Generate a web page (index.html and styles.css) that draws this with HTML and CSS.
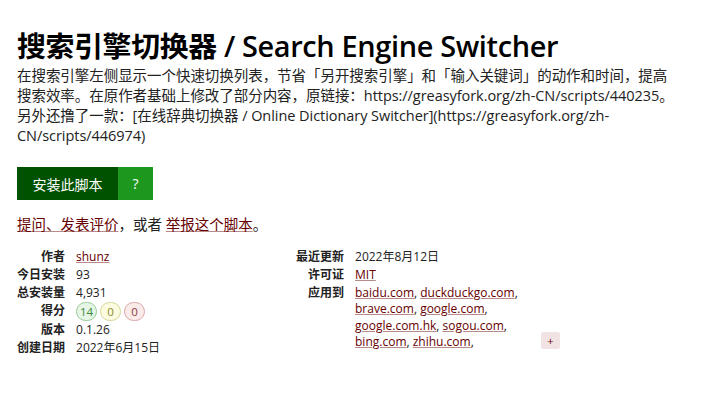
FILE: index.html
```html
<!DOCTYPE html>
<html lang="zh-CN">
<head>
<meta charset="utf-8">
<title>搜索引擎切换器 / Search Engine Switcher</title>
<link rel="stylesheet" href="styles.css">
</head>
<body>
<main class="page">
  <h2 class="title">搜索引擎切换器 / Search Engine Switcher</h2>
  <p class="desc">在搜索引擎左侧显示一个快速切换列表，节省「另开搜索引擎」和「输入关键词」的动作和时间，提高搜索效率。在原作者基础上修改了部分内容，原链接：https://greasyfork.org/zh-CN/scripts/440235。另外还撸了一款：[在线辞典切换器 / Online Dictionary Switcher](https://greasyfork.org/zh-CN/scripts/446974)</p>
  <div class="install">
    <a class="install-link" href="#">安装此脚本</a><a class="install-help" href="#">?</a>
  </div>
  <p class="feedback"><a href="#">提问、发表评价</a>，或者 <a href="#">举报这个脚本</a>。</p>
  <div class="meta">
    <dl class="meta-col">
      <dt>作者</dt><dd><a href="#">shunz</a></dd>
      <dt>今日安装</dt><dd>93</dd>
      <dt>总安装量</dt><dd>4,931</dd>
      <dt>得分</dt><dd class="scores"><span class="score good">14</span><span class="score ok">0</span><span class="score bad">0</span></dd>
      <dt>版本</dt><dd>0.1.26</dd>
      <dt>创建日期</dt><dd>2022年6月15日</dd>
    </dl>
    <dl class="meta-col">
      <dt>最近更新</dt><dd>2022年8月12日</dd>
      <dt>许可证</dt><dd><a href="#">MIT</a></dd>
      <dt>应用到</dt>
      <dd class="applies">
        <span class="sites"><a href="#">baidu.com</a>, <a href="#">duckduckgo.com</a>, <a href="#">brave.com</a>, <a href="#">google.com</a>, <a href="#">google.com.hk</a>, <a href="#">sogou.com</a>, <a href="#">bing.com</a>, <a href="#">zhihu.com</a>,</span>
        <button class="more">+</button>
      </dd>
    </dl>
  </div>
</main>
</body>
</html>
```

FILE: styles.css
```css
html, body {
  margin: 0;
  padding: 0;
  background: #fff;
}
body {
  font-family: "Open Sans", "Noto Sans CJK SC", sans-serif;
  color: #222;
}
.page {
  padding: 26px 14px 0 17px;
}
a {
  color: #670000;
  text-decoration: underline;
  text-decoration-color: #b88a8a;
}
.title {
  margin: 0;
  font-size: 28.9px;
  line-height: 40px;
  font-weight: 600;
  color: #000;
  letter-spacing: -0.35px;
}
.desc {
  margin: 0;
  font-size: 14.5px;
  line-height: 20px;
  color: #222;
  letter-spacing: -0.05px;
  max-width: 661px;
}
.install {
  display: flex;
  margin-top: 21px;
  height: 33px;
}
.install-link, .install-help {
  display: flex;
  align-items: center;
  justify-content: center;
  color: #fff;
  text-decoration: none;
  font-size: 14px;
}
.install-link {
  background: #005200;
  width: 101px;
}
.install-help {
  background: #1e971e;
  width: 35px;
}
.feedback {
  margin: 15px 0 0 0;
  font-size: 14.5px;
  line-height: 20px;
}
.meta {
  display: grid;
  grid-template-columns: 279px auto;
  margin-top: 13px;
  font-size: 12px;
  line-height: 18px;
}
.meta-col {
  margin: 0;
  display: grid;
  grid-template-columns: auto 1fr;
  column-gap: 11px;
  align-content: start;
}
.meta-col dt {
  font-weight: 700;
  text-align: right;
  color: #222;
}
.meta-col dd {
  margin: 0;
}
.scores {
  display: flex;
  gap: 3px;
  align-items: center;
}
.score {
  display: inline-flex;
  align-items: center;
  justify-content: center;
  min-width: 17px;
  height: 17px;
  padding: 0 1px;
  border-radius: 10px;
  font-size: 11.5px;
}
.score.good { background: #e6f5e6; border: 1px solid #99cc99; color: #3c8a3c; }
.score.ok { background: #fbfbdf; border: 1px solid #d6d69c; color: #8a8a30; }
.score.bad { background: #fbeaea; border: 1px solid #d9a9a9; color: #8a3c3c; }
.applies {
  display: flex;
  align-items: flex-end;
}
.sites {
  width: 172px;
  line-height: 16.3px;
  padding-top: 1px;
}
.more {
  margin-left: 14px;
  margin-bottom: 1px;
  align-self: flex-end;
  width: 19px;
  height: 17px;
  padding: 0;
  border: none;
  border-radius: 2px;
  background: #f1e3e3;
  color: #670000;
  font-family: "Open Sans", sans-serif;
  font-size: 11px;
  line-height: 17px;
}
```
